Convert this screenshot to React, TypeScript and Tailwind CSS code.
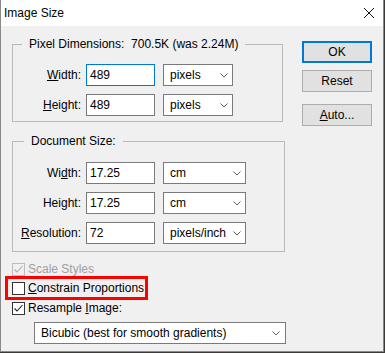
import React from 'react'

function Chevron() {
  return (
    <svg width="8" height="5" viewBox="0 0 8 5" className="shrink-0">
      <polyline points="0.5,0.5 4,4 7.5,0.5" fill="none" stroke="#606060" strokeWidth="1" />
    </svg>
  )
}

function Check({ color }: { color: string }) {
  return (
    <svg width="11" height="11" viewBox="0 0 11 11">
      <polyline points="1.5,5.5 4,8 9.5,2" fill="none" stroke={color} strokeWidth="1.1" />
    </svg>
  )
}

function Select({ value, className }: { value: string; className: string }) {
  return (
    <div
      className={`flex h-[22px] items-center justify-between border border-[#7a7a7a] bg-white pl-[6px] pr-[4px] ${className}`}
    >
      <span>{value}</span>
      <Chevron />
    </div>
  )
}

function Row({
  label,
  value,
  unit,
  focused,
  selectClass,
}: {
  label: React.ReactNode
  value: string
  unit: string
  focused?: boolean
  selectClass: string
}) {
  return (
    <div className="flex h-[22px] items-center">
      <span className="w-[68px] text-right">{label}</span>
      <div
        className={`ml-[5px] flex h-[22px] w-[69px] items-center border bg-white pl-[3px] ${
          focused ? 'border-[#0078d7]' : 'border-[#7a7a7a]'
        }`}
      >
        {value}
      </div>
      <Select value={unit} className={`ml-[8px] ${selectClass}`} />
    </div>
  )
}

function Checkbox({
  checked,
  disabled,
  children,
}: {
  checked?: boolean
  disabled?: boolean
  children: React.ReactNode
}) {
  return (
    <div className={`flex h-[18px] items-center ${disabled ? 'text-[#a0a0a0]' : 'text-black'}`}>
      <div
        className={`flex h-[13px] w-[13px] items-center justify-center border ${
          disabled ? 'border-[#bcbcbc] bg-[#f0f0f0]' : 'border-[#333333] bg-white'
        }`}
      >
        {checked && <Check color={disabled ? '#b0b0b0' : '#222222'} />}
      </div>
      <span className="ml-[3px]">{children}</span>
    </div>
  )
}

function Button({ children, primary }: { children: React.ReactNode; primary?: boolean }) {
  return (
    <div
      className={`flex h-[22px] w-[70px] items-center justify-center bg-[#e1e1e1] ${
        primary ? 'border-2 border-[#0078d7]' : 'border border-[#adadad]'
      }`}
    >
      {children}
    </div>
  )
}

export default function App() {
  return (
    <div className="h-[353px] w-[385px] bg-[#3b3a39] font-['Liberation_Sans',Arial,sans-serif] text-[12px] leading-[16px] text-black">
      <div className="flex h-[352px] w-[384px] flex-col border-x border-b border-[#8a8a8a] bg-[#f0f0f0]">
        {/* title bar */}
        <div className="flex h-[26px] shrink-0 items-center justify-between bg-white pl-[3px] pr-[9px]">
          <span className="text-[12px]">Image Size</span>
          <svg width="10" height="10" viewBox="0 0 10 10">
            <line x1="0" y1="0" x2="10" y2="10" stroke="#111" strokeWidth="1" />
            <line x1="10" y1="0" x2="0" y2="10" stroke="#111" strokeWidth="1" />
          </svg>
        </div>

        <div className="flex flex-col pt-[10px]">
          <div className="flex items-start pl-[11px]">
            <div className="flex w-[274px] flex-col">
              <fieldset className="w-[271px] border border-[#b9b9b9] pb-[5px] pt-[12px]">
                <legend className="ml-[9px] px-[7px] leading-[16px]">
                  Pixel Dimensions:&nbsp; 700.5K (was 2.24M)
                </legend>
                <div className="flex flex-col gap-[8px]">
                  <Row
                    label={
                      <>
                        <span className="underline">W</span>idth:
                      </>
                    }
                    value="489"
                    unit="pixels"
                    focused
                    selectClass="w-[70px]"
                  />
                  <Row
                    label={
                      <>
                        <span className="underline">H</span>eight:
                      </>
                    }
                    value="489"
                    unit="pixels"
                    selectClass="w-[70px]"
                  />
                </div>
              </fieldset>

              <fieldset className="mt-[11px] w-[273px] border border-[#b9b9b9] pb-[7px] pt-[13px]">
                <legend className="ml-[11px] px-[7px] leading-[16px]">Document Size:</legend>
                <div className="flex flex-col gap-[8px]">
                  <Row
                    label={
                      <>
                        Wi<span className="underline">d</span>th:
                      </>
                    }
                    value="17.25"
                    unit="cm"
                    selectClass="w-[83px]"
                  />
                  <Row
                    label={
                      <>
                        Hei<span className="underline">g</span>ht:
                      </>
                    }
                    value="17.25"
                    unit="cm"
                    selectClass="w-[83px]"
                  />
                  <Row
                    label={
                      <>
                        <span className="underline">R</span>esolution:
                      </>
                    }
                    value="72"
                    unit="pixels/inch"
                    selectClass="w-[83px]"
                  />
                </div>
              </fieldset>
            </div>

            <div className="ml-[16px] flex flex-col pt-[5px]">
              <Button primary>OK</Button>
              <div className="mt-[7px]">
                <Button>Reset</Button>
              </div>
              <div className="mt-[12px]">
                <Button>
                  <span>
                    <span className="underline">A</span>uto...
                  </span>
                </Button>
              </div>
            </div>
          </div>

          <div className="mt-[8px] flex flex-col pl-[11px]">
            <Checkbox checked disabled>
              Scale Styles
            </Checkbox>
            <div className="relative mt-[1px]">
              <Checkbox>
                <span className="underline">C</span>onstrain Proportions
              </Checkbox>
              <span className="absolute left-[-7px] top-[-3px] h-[24px] w-[143px] border-[3px] border-[#ff0000]" />
            </div>
            <div className="mt-[2px]">
              <Checkbox checked>
                Resample <span className="underline">I</span>mage:
              </Checkbox>
            </div>
          </div>

          <div className="ml-[33px] mt-[5px]">
            <Select value="Bicubic (best for smooth gradients)" className="w-[252px] pl-[6px] pr-[5px]" />
          </div>
        </div>
      </div>
    </div>
  )
}
